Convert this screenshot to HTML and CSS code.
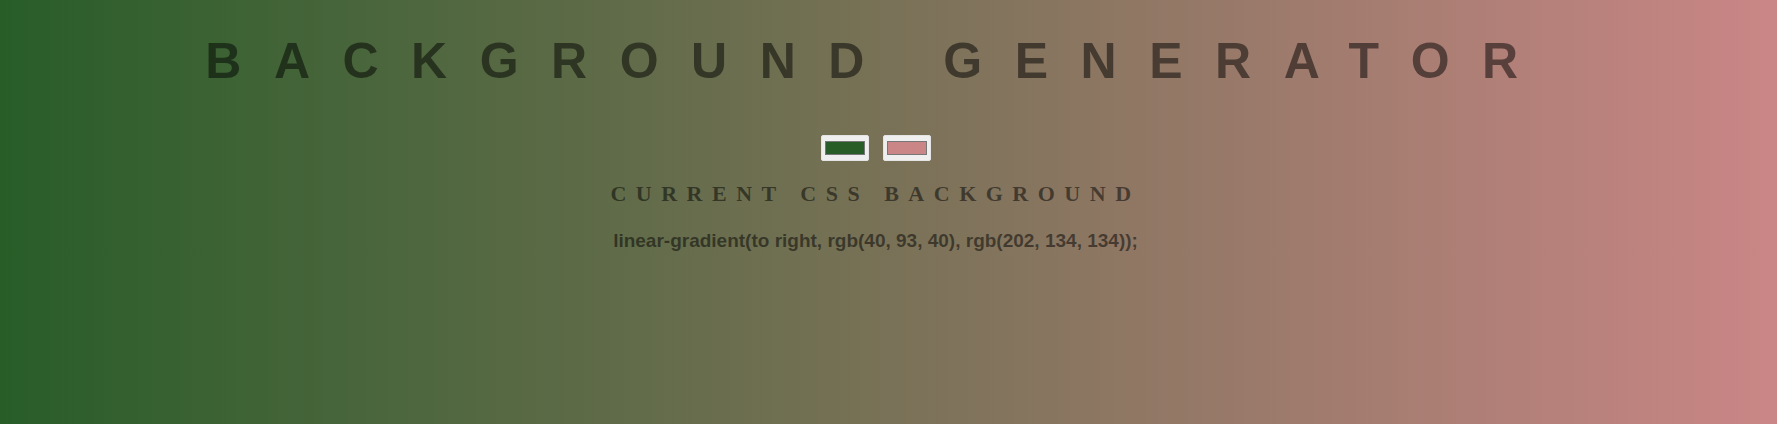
FILE: index.html
```html
<!DOCTYPE html>
<html lang="en">
<head>
<meta charset="utf-8">
<title>Background Generator</title>
<link rel="stylesheet" href="styles.css">
</head>
<body>
<main class="page">
  <h1 class="title">Background Generator</h1>
  <div class="pickers">
    <input class="picker" type="color" name="color1" value="#285d28">
    <input class="picker" type="color" name="color2" value="#ca8686">
  </div>
  <h3 class="subtitle">Current CSS Background</h3>
  <p class="css-output">linear-gradient(to right, rgb(40, 93, 40), rgb(202, 134, 134));</p>
</main>
</body>
</html>
```

FILE: styles.css
```css
html {
  min-height: 100%;
  background: linear-gradient(to right, rgb(40, 93, 40), rgb(202, 134, 134));
}

body {
  margin: 0;
  min-height: 100vh;
  color: rgba(0, 0, 0, 0.5);
}

.page {
  display: flex;
  flex-direction: column;
  align-items: center;
  padding: 0 26px 0 0;
  text-align: center;
}

.title {
  margin: 0;
  padding: 32px 0 0 5px;
  font-family: "Liberation Sans", Arial, sans-serif;
  font-weight: 700;
  font-size: 50px;
  line-height: normal;
  letter-spacing: 32.5px;
  text-transform: uppercase;
}

.pickers {
  display: flex;
  gap: 14px;
  margin-top: 45px;
}

.picker {
  -webkit-appearance: none;
  appearance: none;
  width: 48px;
  height: 26px;
  padding: 0;
  margin: 0;
  border: 1px solid #e4e4e4;
  border-radius: 2px;
  background: #efefef;
  cursor: pointer;
}

.picker::-webkit-color-swatch-wrapper {
  padding: 5px 3px;
}

.picker::-webkit-color-swatch {
  border: 1px solid #777777;
  border-radius: 0;
}

.subtitle {
  margin: 20px 0 0;
  font-family: "Liberation Serif", "Times New Roman", serif;
  font-weight: 700;
  font-size: 22px;
  line-height: normal;
  letter-spacing: 9.5px;
  text-transform: uppercase;
}

.css-output {
  margin: 23px 0 0;
  font-family: "Liberation Sans", Arial, sans-serif;
  font-weight: 700;
  font-size: 19px;
  line-height: normal;
}
```
